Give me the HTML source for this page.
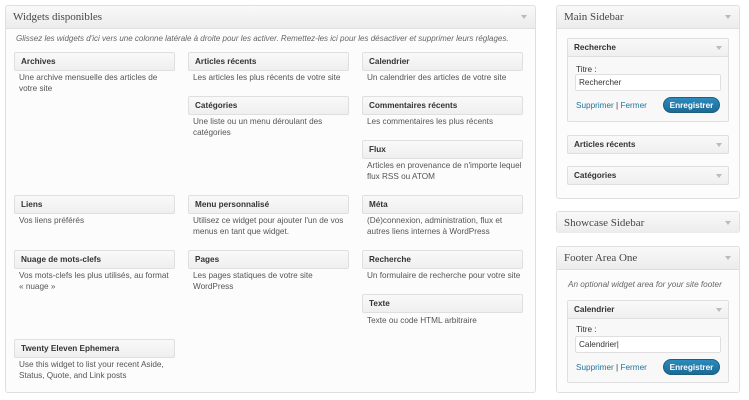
<!DOCTYPE html><html><head><meta charset="utf-8"><style>
*{box-sizing:border-box;margin:0;padding:0}
body{width:749px;height:400px;background:#fff;font-family:"Liberation Sans",Arial,sans-serif;font-size:8.2px;color:#555;position:relative;overflow:hidden}
.a{position:absolute}
.panel{position:absolute;background:#fcfcfc;border:1px solid #dfdfdf;border-radius:3px}
.ph{position:absolute;left:0;right:0;top:0;height:23px;background:linear-gradient(#f9f9f9,#ececec);border-bottom:1px solid #dfdfdf;font-family:"Liberation Serif",Georgia,serif;font-size:11px;color:#464646;padding:5px 0 0 7px;border-radius:3px 3px 0 0}
.arr{position:absolute;right:8px;top:9px;width:0;height:0;border-left:3px solid transparent;border-right:3px solid transparent;border-top:4px solid #bbb}
.w{position:absolute;height:19px;background:linear-gradient(#f9f9f9,#efefef);border:1px solid #dfdfdf;border-radius:2px;font-weight:bold;font-size:8.2px;color:#333;padding:4px 0 0 6px}
.d{position:absolute;width:158px;line-height:11px;color:#555}
.box{position:absolute;background:#f8f8f8;border:1px solid #dfdfdf;border-radius:2px}
.inp{position:absolute;height:17px;background:#fff;border:1px solid #dfdfdf;border-radius:2px;font-size:8.2px;color:#333;padding:3px 0 0 3px}
.lk{position:absolute;color:#21759b;font-size:8.2px}
.btn{position:absolute;width:57px;height:16px;border-radius:9px;background:linear-gradient(#2a8bbd,#1e6a93);color:#fff;font-weight:bold;font-size:8.2px;text-align:center;padding-top:3px;border:1px solid #1b607f}
</style></head><body>
<div class="panel" style="left:5px;top:5px;width:531px;height:388px">
<div class="ph">Widgets disponibles<div class="arr"></div></div>
</div>
<div class="a" style="left:16px;top:34px;font-style:italic;color:#666;font-size:8px">Glissez les widgets d'ici vers une colonne latérale à droite pour les activer. Remettez-les ici pour les désactiver et supprimer leurs réglages.</div>

<div class="w" style="left:14px;top:52px;width:161px">Archives</div>
<div class="d" style="left:19px;top:72px">Une archive mensuelle des articles de votre site</div>
<div class="w" style="left:188px;top:52px;width:161px">Articles récents</div>
<div class="d" style="left:193px;top:72px">Les articles les plus récents de votre site</div>
<div class="w" style="left:362px;top:52px;width:161px">Calendrier</div>
<div class="d" style="left:367px;top:72px">Un calendrier des articles de votre site</div>

<div class="w" style="left:188px;top:96px;width:161px">Catégories</div>
<div class="d" style="left:193px;top:116px">Une liste ou un menu déroulant des catégories</div>
<div class="w" style="left:362px;top:96px;width:161px">Commentaires récents</div>
<div class="d" style="left:367px;top:116px">Les commentaires les plus récents</div>
<div class="w" style="left:362px;top:140px;width:161px">Flux</div>
<div class="d" style="left:367px;top:160px">Articles en provenance de n'importe lequel flux RSS ou ATOM</div>

<div class="w" style="left:14px;top:195px;width:161px">Liens</div>
<div class="d" style="left:19px;top:215px">Vos liens préférés</div>
<div class="w" style="left:188px;top:195px;width:161px">Menu personnalisé</div>
<div class="d" style="left:193px;top:215px">Utilisez ce widget pour ajouter l'un de vos menus en tant que widget.</div>
<div class="w" style="left:362px;top:195px;width:161px">Méta</div>
<div class="d" style="left:367px;top:215px">(Dé)connexion, administration, flux et autres liens internes à WordPress</div>

<div class="w" style="left:14px;top:250px;width:161px">Nuage de mots-clefs</div>
<div class="d" style="left:19px;top:270px;width:150px">Vos mots-clefs les plus utilisés, au format « nuage »</div>
<div class="w" style="left:188px;top:250px;width:161px">Pages</div>
<div class="d" style="left:193px;top:270px">Les pages statiques de votre site WordPress</div>
<div class="w" style="left:362px;top:250px;width:161px">Recherche</div>
<div class="d" style="left:367px;top:270px">Un formulaire de recherche pour votre site</div>
<div class="w" style="left:362px;top:294px;width:161px">Texte</div>
<div class="d" style="left:367px;top:315px">Texte ou code HTML arbitraire</div>
<div class="w" style="left:14px;top:339px;width:161px">Twenty Eleven Ephemera</div>
<div class="d" style="left:19px;top:359px">Use this widget to list your recent Aside, Status, Quote, and Link posts</div>

<div class="panel" style="left:556px;top:5px;width:184px;height:194px"><div class="ph">Main Sidebar<div class="arr"></div></div></div>
<div class="box" style="left:567px;top:38px;width:162px;height:84px"></div>
<div class="w" style="left:567px;top:38px;width:162px;height:19px">Recherche<div class="arr" style="right:6px;top:7px"></div></div>
<div class="a" style="left:576px;top:65px;color:#333">Titre :</div>
<div class="inp" style="left:575px;top:74px;width:146px">Rechercher</div>
<div class="lk" style="left:576px;top:101px">Supprimer <span style="color:#333">|</span> Fermer</div>
<div class="btn" style="left:663px;top:97px">Enregistrer</div>
<div class="w" style="left:567px;top:135px;width:162px">Articles récents<div class="arr" style="right:6px;top:7px"></div></div>
<div class="w" style="left:567px;top:166px;width:162px">Catégories<div class="arr" style="right:6px;top:7px"></div></div>

<div class="panel" style="left:556px;top:211px;width:184px;height:22px"><div class="ph" style="height:21px;border-bottom:0">Showcase Sidebar<div class="arr"></div></div></div>

<div class="panel" style="left:556px;top:246px;width:184px;height:147px"><div class="ph">Footer Area One<div class="arr"></div></div></div>
<div class="a" style="left:568px;top:280px;font-style:italic;color:#666">An optional widget area for your site footer</div>
<div class="box" style="left:567px;top:300px;width:162px;height:83px"></div>
<div class="w" style="left:567px;top:300px;width:162px;height:19px">Calendrier<div class="arr" style="right:6px;top:7px"></div></div>
<div class="a" style="left:576px;top:325px;color:#333">Titre :</div>
<div class="inp" style="left:575px;top:336px;width:146px">Calendrier|</div>
<div class="lk" style="left:576px;top:363px">Supprimer <span style="color:#333">|</span> Fermer</div>
<div class="btn" style="left:663px;top:359px">Enregistrer</div>
</body></html>
